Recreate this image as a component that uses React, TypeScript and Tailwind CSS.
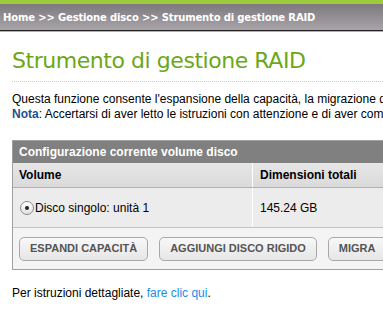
export default function App() {
  return (
    <div className="w-[383px] h-[316px] overflow-hidden bg-white font-['Liberation_Sans',Arial,sans-serif]">
      {/* top bars */}
      <div className="h-[4px] bg-[#9ccb3d]" />
      <div className="h-[27px] bg-gradient-to-b from-[#7d787d] to-[#a9a5a9] border-b border-[#222] flex items-center pl-[3px]">
        <span className="font-['DejaVu_Sans',Verdana,sans-serif] font-bold text-[10px] text-white whitespace-nowrap tracking-[-0.15px]">
          Home &gt;&gt; Gestione disco &gt;&gt; Strumento di gestione RAID
        </span>
      </div>
      <div className="h-[1px] bg-[#8fb8e8]" />

      <div className="pl-[12px]">
        <h1 className="mt-[15px] font-['DejaVu_Sans',Verdana,sans-serif] text-[22px] leading-[28px] text-[#6aa817] whitespace-nowrap tracking-[-0.45px]">
          Strumento di gestione RAID
        </h1>
        <div className="mt-[6px] border-t border-dotted border-[#c8c8c8]" />

        <div className="mt-[10px] text-[12px] leading-[15px] text-black whitespace-nowrap">
          <p>Questa funzione consente l'espansione della capacità, la migrazione del volume</p>
          <p>
            <span className="font-bold text-[#1f4f8f]">Nota</span>: Accertarsi di aver letto le istruzioni con attenzione e di aver compreso
          </p>
        </div>

        {/* table */}
        <div className="mt-[18px] w-[420px] border border-[#a0a0a0]">
          <div className="h-[22px] bg-[#808080] flex items-center pl-[6px] text-[12px] font-bold text-white whitespace-nowrap">
            Configurazione corrente volume disco
          </div>
          <div className="flex h-[25px] bg-gradient-to-b from-[#e6e6e6] to-[#dadada] border-b border-[#b0b0b0] text-[12px] font-bold text-black">
            <div className="w-[240px] flex items-center pl-[6px] border-r border-white">Volume</div>
            <div className="flex-1 flex items-center pl-[7px] whitespace-nowrap">Dimensioni totali</div>
          </div>
          <div className="flex h-[40px] bg-[#ececec] border-b border-[#c4c4c4] text-[12px] text-black">
            <div className="w-[240px] flex items-center pl-[7px] border-r border-white">
              <span className="w-[14px] h-[14px] rounded-full border border-[#888] bg-gradient-to-b from-white to-[#e2e2e2] flex items-center justify-center">
                <span className="w-[4px] h-[4px] rounded-full bg-[#222]" />
              </span>
              <span className="ml-[1px]">Disco singolo: unità 1</span>
            </div>
            <div className="flex-1 flex items-center pl-[7px]">145.24 GB</div>
          </div>
          <div className="h-[41px] bg-[#f4f4f4] flex items-center pl-[6px] gap-[11px]">
            {['ESPANDI CAPACITÀ', 'AGGIUNGI DISCO RIGIDO', 'MIGRA'].map((label) => (
              <button
                key={label}
                className="h-[24px] px-[10px] rounded-[5px] border border-[#a8a8a8] bg-gradient-to-b from-[#f8f8f8] to-[#e6e6e6] text-[11px] font-bold text-[#555] whitespace-nowrap"
              >
                {label}
              </button>
            ))}
          </div>
        </div>

        <p className="mt-[14px] text-[12px] text-black whitespace-nowrap">
          Per istruzioni dettagliate, <span className="text-[#1a8be8]">fare clic qui</span>.
        </p>
      </div>
    </div>
  );
}
